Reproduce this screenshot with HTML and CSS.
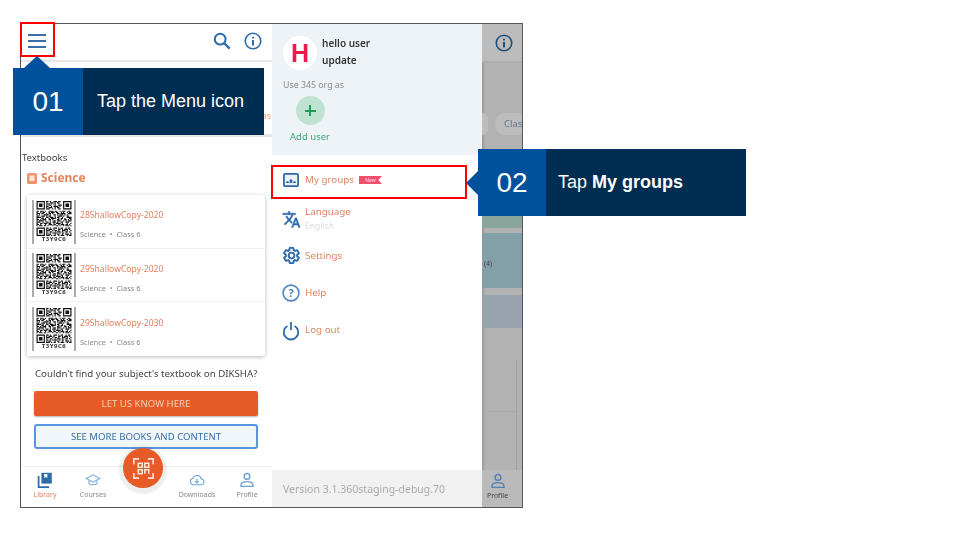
FILE: index.html
```html
<!DOCTYPE html>
<html lang="en">
<head>
  <meta charset="UTF-8" />
  <title>My groups - steps</title>
  <link rel="stylesheet" href="styles.css">
</head>
<body>
  <svg class="defs" width="0" height="0">
    <symbol id="qr" viewBox="0 0 29 29">
      <path d="M0 0h7v7H0zM1 1v5h5V1zM2 2h3v3H2zM22 0h7v7h-7zM23 1v5h5V1zM24 2h3v3h-3zM0 22h7v7H0zM1 23v5h5v-5zM2 24h3v3H2z" fill-rule="evenodd" fill="#111"/>
      <g fill="none" stroke="#111" stroke-width="1">
        <path d="M8 .5h13" stroke-dasharray="2 1 1 2 3 1 2 1"/>
        <path d="M8 1.5h13" stroke-dasharray="1 2 3 1 1 1 2 2"/>
        <path d="M8 2.5h13" stroke-dasharray="3 1 1 1 2 2 1 2"/>
        <path d="M8 3.5h13" stroke-dasharray="1 1 2 3 1 2 3 1"/>
        <path d="M8 4.5h13" stroke-dasharray="2 2 1 1 4 1 1 1"/>
        <path d="M8 5.5h13" stroke-dasharray="1 1 3 2 1 1 2 2"/>
        <path d="M8 6.5h13" stroke-dasharray="3 2 1 1 1 2 2 1"/>
        <path d="M0 8.5h29" stroke-dasharray="2 1 3 1 1 2 4 1 2 2 1 1 3 2"/>
        <path d="M0 9.5h29" stroke-dasharray="1 2 1 1 2 3 1 1 3 1 2 2 1 1"/>
        <path d="M0 10.5h29" stroke-dasharray="3 1 2 2 1 1 2 1 1 3 2 1 4 2"/>
        <path d="M0 11.5h29" stroke-dasharray="1 1 1 3 4 1 1 2 2 1 1 1 3 1"/>
        <path d="M0 12.5h29" stroke-dasharray="2 2 3 1 1 1 2 3 1 2 3 1 1 2"/>
        <path d="M0 13.5h29" stroke-dasharray="4 1 1 2 2 1 3 1 1 1 2 2 1 3"/>
        <path d="M0 14.5h29" stroke-dasharray="1 3 2 1 1 2 1 1 4 2 1 1 2 1"/>
        <path d="M0 15.5h29" stroke-dasharray="2 1 1 1 3 2 2 1 1 3 2 1 1 2"/>
        <path d="M0 16.5h29" stroke-dasharray="1 1 4 1 1 3 1 2 2 1 3 2 1 1"/>
        <path d="M0 17.5h29" stroke-dasharray="3 2 1 2 2 1 1 1 3 1 1 2 2 2"/>
        <path d="M0 18.5h29" stroke-dasharray="1 2 2 1 3 1 2 2 1 1 4 1 1 3"/>
        <path d="M0 19.5h29" stroke-dasharray="2 1 1 3 1 2 3 1 2 2 1 1 3 1"/>
        <path d="M0 20.5h29" stroke-dasharray="1 1 3 1 2 1 1 3 1 2 2 1 1 2"/>
        <path d="M8 22.5h21" stroke-dasharray="2 1 1 2 3 1 1 1 2 2 1 1"/>
        <path d="M8 23.5h21" stroke-dasharray="1 1 3 1 1 3 2 1 1 1 3 1"/>
        <path d="M8 24.5h21" stroke-dasharray="3 2 1 1 2 1 1 2 3 1 1 2"/>
        <path d="M8 25.5h21" stroke-dasharray="1 2 2 2 1 1 3 1 1 2 2 1"/>
        <path d="M8 26.5h21" stroke-dasharray="2 1 1 1 4 2 1 1 2 1 1 3"/>
        <path d="M8 27.5h21" stroke-dasharray="1 1 2 3 1 1 2 2 1 2 3 1"/>
        <path d="M8 28.5h21" stroke-dasharray="3 1 1 1 2 2 1 1 3 2 1 1"/>
      </g>
    </symbol>
    <symbol id="info" viewBox="0 0 20 20">
      <circle cx="10" cy="10" r="8.6" fill="none" stroke="currentColor" stroke-width="1.8"/>
      <circle cx="10" cy="6.2" r="1.2" fill="currentColor"/>
      <path d="M10 9v6" stroke="currentColor" stroke-width="2.2"/>
    </symbol>
    <symbol id="person" viewBox="0 0 20 20">
      <g fill="none" stroke="currentColor" stroke-width="1.7">
        <circle cx="10" cy="5.5" r="3.6"/>
        <path d="M2.5 18v-1.5c0-2.6 3-4.4 7.5-4.4s7.5 1.8 7.5 4.4V18z"/>
      </g>
    </symbol>
  </svg>

  <div class="slide">
    <div class="frame">
      <!-- left: library screen -->
      <div class="screen">
        <div class="topbar">
          <div class="burger"><span></span><span></span><span></span></div>
          <div class="topbar-right">
            <svg class="ic-search" viewBox="0 0 20 20"><circle cx="8" cy="8" r="6" fill="none" stroke="#2f6ba8" stroke-width="2.2"/><path d="M12.5 12.5l6 6" stroke="#2f6ba8" stroke-width="2.6"/></svg>
            <svg class="ic-info"><use href="#info"/></svg>
          </div>
        </div>
        <div class="filters"><span class="filter-cut">as</span></div>
        <div class="content">
          <div class="label">Textbooks</div>
          <div class="subject">
            <svg viewBox="0 0 10 11"><rect width="10" height="11" rx="1.5" fill="#ee9570"/><rect x="2.5" y="2.5" width="5" height="5.5" fill="#fbe3d8"/></svg>
            <span>Science</span>
          </div>
          <div class="book-card">
            <div class="book">
              <div class="qr-wrap">
                <svg class="qr"><use href="#qr"/></svg>
                <div class="qr-code">T3Y9C6</div>
              </div>
              <div class="book-info">
                <div class="book-title">28ShallowCopy-2020</div>
                <div class="book-meta">Science &nbsp;•&nbsp; Class 6</div>
              </div>
            </div>
            <div class="book">
              <div class="qr-wrap">
                <svg class="qr"><use href="#qr"/></svg>
                <div class="qr-code">T3Y9C6</div>
              </div>
              <div class="book-info">
                <div class="book-title">29ShallowCopy-2020</div>
                <div class="book-meta">Science &nbsp;•&nbsp; Class 6</div>
              </div>
            </div>
            <div class="book">
              <div class="qr-wrap">
                <svg class="qr"><use href="#qr"/></svg>
                <div class="qr-code">T3Y9C6</div>
              </div>
              <div class="book-info">
                <div class="book-title">29ShallowCopy-2030</div>
                <div class="book-meta">Science &nbsp;•&nbsp; Class 6</div>
              </div>
            </div>
          </div>
          <p class="notfound">Couldn't find your subject's textbook on DIKSHA?</p>
          <div class="btn btn-orange">LET US KNOW HERE</div>
          <div class="btn btn-outline">SEE MORE BOOKS AND CONTENT</div>
        </div>
        <div class="tabs">
          <div class="tab tab-active">
            <svg viewBox="0 0 20 20"><path d="M5.500 1h13v13.500h-13z" fill="#2f6ba8"/><path d="M13 2.500v5l-2-1.300L9 7.500v-5z" fill="#fff"/><path d="M2 5v14h13" fill="none" stroke="#2f6ba8" stroke-width="2.200"/></svg>
            <span>Library</span>
          </div>
          <div class="tab">
            <svg viewBox="0 0 20 20"><g fill="none" stroke="#7fb2de" stroke-width="1.400"><path d="M1.500 8L10 3.500 18.500 8 10 12.500z"/><path d="M5 10.500v4c1.500 2 8.500 2 10 0v-4"/></g></svg>
            <span>Courses</span>
          </div>
          <div class="tab-gap"></div>
          <div class="tab">
            <svg viewBox="0 0 20 20"><g fill="none" stroke="#6fa5d8" stroke-width="1.400"><path d="M5.500 16h9.500a3.600 3.600 0 0 0 .5-7.200A5.500 5.500 0 0 0 5 7.900 4.100 4.100 0 0 0 5.500 16z"/><path d="M10 8v5.500M7.800 11.500l2.200 2.200 2.200-2.200"/></g></svg>
            <span>Downloads</span>
          </div>
          <div class="tab tab-profile">
            <svg class="ic-person"><use href="#person"/></svg>
            <span>Profile</span>
          </div>
        </div>
        <div class="fab">
          <svg viewBox="0 0 24 24"><g fill="none" stroke="#fbe6dc" stroke-width="1.800"><path d="M1 7V1h6M17 1h6v6M1 17v6h6M23 17v6h-6"/><path d="M6 6h4.500v4.500H6zM13.500 6H18v4.500h-4.500zM6 13.500h4.500V18H6zM13.500 18v-4.500H18V18"/></g></svg>
        </div>
      </div>

      <!-- middle: side menu -->
      <div class="drawer">
        <div class="drawer-head">
          <div class="user">
            <div class="avatar">H</div>
            <div class="user-name">hello user<br>update</div>
          </div>
          <div class="org">Use 345 org as</div>
          <div class="add-user">
            <div class="add-circle"></div>
            <span>Add user</span>
          </div>
        </div>
        <div class="menu">
          <div class="menu-item item-groups">
            <svg viewBox="0 0 18 16"><rect x="1" y="1" width="16" height="14" rx="1.500" fill="#eaf1f8" stroke="#2f6ba8" stroke-width="2"/><path d="M3.500 11.500V10l1.500-1 1.500 1v1.500zM7.500 11.500V8l1.500-1.200L10.500 8v3.500zM11.500 11.500V10l1.500-1 1.500 1v1.500z" fill="#2f6ba8"/></svg>
            <span>My groups</span>
            <b class="new-flag">New</b>
          </div>
          <div class="menu-item item-lang">
            <svg viewBox="0 0 24 24"><path fill="#2f6ba8" stroke="#2f6ba8" stroke-width="0.600" d="M12.870 15.070l-2.540-2.510.03-.03c1.740-1.940 2.980-4.170 3.710-6.530H17V4h-7V2H8v2H1v1.990h11.170C11.500 7.920 10.440 9.750 9 11.350 8.070 10.320 7.300 9.190 6.690 8h-2c.73 1.630 1.730 3.170 2.980 4.560l-5.090 5.020L4 19l5-5 3.110 3.110.76-2.040zM18.500 10h-2L12 22h2l1.120-3h4.750L21 22h2l-4.500-12zm-2.620 7l1.620-4.330L19.120 17h-3.240z"/></svg>
            <div>
              <span>Language</span>
              <small>English</small>
            </div>
          </div>
          <div class="menu-item item-settings">
            <svg viewBox="0 0 24 24"><path fill="none" stroke="#2f6ba8" stroke-width="2.400" d="M19.140 12.940c.04-.3.06-.61.06-.94 0-.32-.02-.64-.07-.94l2.030-1.580a.49.49 0 0 0 .12-.61l-1.920-3.320a.488.488 0 0 0-.59-.22l-2.390.96c-.5-.38-1.030-.7-1.620-.94l-.36-2.540a.484.484 0 0 0-.48-.41h-3.840c-.24 0-.43.17-.47.41l-.36 2.540c-.59.24-1.130.57-1.620.94l-2.390-.96c-.22-.08-.47 0-.59.22L2.740 8.870c-.12.21-.08.47.12.61l2.030 1.580c-.05.3-.09.63-.09.94s.02.64.07.94l-2.030 1.580a.49.49 0 0 0-.12.61l1.920 3.320c.12.22.37.29.59.22l2.390-.96c.5.38 1.030.7 1.620.94l.36 2.540c.05.24.24.41.48.41h3.840c.24 0 .44-.17.47-.41l.36-2.540c.59-.24 1.130-.56 1.620-.94l2.390.96c.22.08.47 0 .59-.22l1.920-3.320c.12-.22.07-.47-.12-.61l-2.010-1.580zM12 15.600c-1.980 0-3.600-1.620-3.600-3.600s1.620-3.600 3.600-3.600 3.600 1.620 3.600 3.600-1.620 3.600-3.600 3.600z"/></svg>
            <span>Settings</span>
          </div>
          <div class="menu-item item-help">
            <svg viewBox="0 0 20 20"><circle cx="10" cy="10" r="8.800" fill="none" stroke="#4f86c2" stroke-width="1.800"/><text x="10" y="14" text-anchor="middle" class="help-q">?</text></svg>
            <span>Help</span>
          </div>
          <div class="menu-item item-logout">
            <svg viewBox="0 0 20 22"><path d="M6 5.500a8 8 0 1 0 8 0" fill="none" stroke="#2f6ba8" stroke-width="2"/><path d="M10 1v9" stroke="#2f6ba8" stroke-width="2"/></svg>
            <span>Log out</span>
          </div>
        </div>
        <div class="version">Version 3.1.360staging-debug.70</div>
      </div>

      <!-- right: dimmed rest of the screen -->
      <div class="scrim">
        <div class="scrim-top"><svg class="ic-info-dim"><use href="#info"/></svg></div>
        <div class="scrim-chips">
          <div class="scrim-chip-end"></div>
          <div class="scrim-chip">Clas</div>
        </div>
        <div class="scrim-green"></div>
        <div class="scrim-teal">(4)</div>
        <div class="scrim-blue"></div>
        <div class="scrim-cards">
          <div class="scrim-card"></div>
          <div class="scrim-card"></div>
        </div>
        <div class="scrim-tab">
          <svg class="ic-person"><use href="#person"/></svg>
          <span>Profile</span>
        </div>
      </div>
    </div>

    <div class="redbox redbox-menu"></div>
    <div class="redbox redbox-groups"></div>

    <div class="callout callout-one">
      <div class="callout-num">01</div>
      <div class="callout-text">Tap the Menu icon</div>
    </div>
    <div class="callout callout-two">
      <div class="callout-num">02</div>
      <div class="callout-text">Tap <b>My groups</b></div>
    </div>
  </div>
</body>
</html>
```

FILE: styles.css
```css
* {
  box-sizing: border-box;
}
body {
  margin: 0;
  background: #fff;
  font-family: "Noto Sans", sans-serif;
}
.defs {
  position: absolute;
}
.slide {
  position: relative;
  width: 960px;
  height: 540px;
  overflow: hidden;
  padding: 23px 0 0 20px;
}
.frame {
  display: flex;
  width: 503px;
  height: 485px;
  border: 1px solid #555;
}

/* left screen */
.screen {
  position: relative;
  display: flex;
  flex-direction: column;
  width: 251px;
  height: 483px;
  filter: blur(0.55px);
}
.topbar {
  display: flex;
  align-items: center;
  justify-content: space-between;
  height: 38px;
  padding: 0 10px 2px 7px;
  border-bottom: 2px solid #e8e8e8;
  flex-shrink: 0;
}
.burger {
  display: flex;
  flex-direction: column;
  gap: 4px;
  width: 18px;
}
.burger span {
  height: 2px;
  background: #3b6ea5;
}
.topbar-right {
  display: flex;
  align-items: center;
  gap: 13px;
}
.ic-search {
  width: 18px;
  height: 18px;
}
.ic-info {
  width: 18px;
  height: 18px;
  color: #2f6ba8;
}
.filters {
  position: relative;
  height: 75px;
  border-bottom: 3px solid #e6e6e6;
  flex-shrink: 0;
}
.filter-cut {
  position: absolute;
  right: 1px;
  top: 47px;
  font-size: 9px;
  color: #e8a283;
}
.content {
  flex: 1;
  padding: 14px 0 0 1px;
}
.label {
  font-size: 9.5px;
  line-height: 14px;
  color: #444;
}
.subject {
  display: flex;
  align-items: center;
  gap: 4px;
  margin: 4px 0 0 5px;
  font-size: 12px;
  font-weight: 700;
  line-height: 18px;
  color: #e8835a;
}
.subject svg {
  width: 10px;
  height: 11px;
}
.book-card {
  width: 238px;
  margin: 8px 0 0 5px;
  background: #fff;
  box-shadow: 0 1px 4px rgba(0,0,0,0.28);
  border-radius: 2px;
}
.book {
  display: flex;
  align-items: center;
  gap: 4px;
  height: 53px;
  padding: 0 0 0 5px;
  border-bottom: 1px solid #f0f0f0;
}
.book:first-child,
.book:last-child {
  height: 54px;
}
.book:last-child {
  border-bottom: 0;
}
.qr-wrap {
  width: 44px;
  height: 44px;
  padding: 1px 2px 0;
  border-left: 2px solid #aaa;
  border-right: 2px solid #aaa;
  text-align: center;
}
.qr {
  display: block;
  width: 36px;
  height: 35px;
}
.qr-code {
  font-size: 6px;
  font-weight: 700;
  line-height: 7px;
  letter-spacing: 0.5px;
  color: #333;
  white-space: nowrap;
}
.book-info {
  padding-top: 5px;
}
.book-title {
  font-size: 8.6px;
  line-height: 12px;
  color: #e0835f;
}
.book-meta {
  margin-top: 8px;
  font-size: 7.4px;
  line-height: 10px;
  color: #888;
}
.notfound {
  margin: 11px 0 0 13px;
  font-size: 9.7px;
  line-height: 14px;
  color: #444;
  white-space: nowrap;
}
.btn {
  display: flex;
  align-items: center;
  justify-content: center;
  width: 224px;
  height: 25px;
  margin: 10px 0 0 12px;
  font-size: 9.6px;
  border-radius: 2px;
}
.btn-orange {
  background: #e65b26;
  color: #f8cdb8;
  box-shadow: 0 1px 2px rgba(0,0,0,0.3);
}
.btn-outline {
  margin-top: 8px;
  background: #f1f6fb;
  border: 2px solid #5a93e0;
  border-radius: 3px;
  color: #3a6ea5;
}
.tabs {
  display: flex;
  height: 41px;
  border-top: 1px solid #eee;
  flex-shrink: 0;
}
.tab {
  display: flex;
  flex-direction: column;
  align-items: center;
  width: 48px;
  padding-top: 5px;
  font-size: 7px;
  line-height: 10px;
  color: #888;
}
.tab svg {
  width: 16px;
  height: 16px;
  margin-bottom: 2px;
}
.tab-active {
  color: #e0835f;
}
.tab-gap {
  width: 56px;
}
.tab-profile {
  margin-left: 2px;
}
.ic-person {
  color: #6a9fd6;
}
.fab {
  position: absolute;
  left: 102px;
  bottom: 19px;
  display: flex;
  align-items: center;
  justify-content: center;
  width: 40px;
  height: 40px;
  background: #e65b26;
  border-radius: 50%;
  box-shadow: 0 2px 2px 4px rgba(0,0,0,0.07);
}
.fab svg {
  width: 21px;
  height: 21px;
}

/* side menu */
.drawer {
  display: flex;
  flex-direction: column;
  width: 210px;
  height: 483px;
  background: #fff;
  filter: blur(0.55px);
}
.drawer-head {
  height: 131px;
  padding: 12px 0 0 11px;
  background: #eef3f8;
  flex-shrink: 0;
}
.user {
  display: flex;
  gap: 5px;
}
.avatar {
  display: flex;
  align-items: center;
  justify-content: center;
  width: 34px;
  height: 34px;
  background: #fff;
  border-radius: 50%;
  font-family: "Liberation Sans", sans-serif;
  font-size: 25px;
  font-weight: 700;
  color: #ec1a4b;
}
.user-name {
  margin-top: -1px;
  font-size: 10px;
  font-weight: 600;
  line-height: 17px;
  color: #333;
}
.org {
  margin-top: 9px;
  font-size: 8.8px;
  line-height: 12px;
  color: #888;
}
.add-user {
  display: flex;
  flex-direction: column;
  align-items: center;
  width: 54px;
  margin: 5px 0 0 0;
  font-size: 9.5px;
  line-height: 13px;
  color: #3aa876;
}
.add-circle {
  position: relative;
  width: 29px;
  height: 29px;
  margin-bottom: 5px;
  background: #bfe3d0;
  border-radius: 50%;
}
.add-circle::before,
.add-circle::after {
  content: "";
  position: absolute;
  background: #1e9e5a;
}
.add-circle::before {
  left: 9px;
  top: 13.5px;
  width: 11px;
  height: 2.2px;
}
.add-circle::after {
  left: 13.4px;
  top: 9px;
  width: 2.2px;
  height: 11px;
}
.menu {
  flex: 1;
  padding-left: 11px;
}
.menu-item {
  display: flex;
  align-items: center;
  gap: 6px;
  font-size: 9.8px;
  line-height: 14px;
  color: #df8560;
}
.menu-item svg {
  width: 16px;
  height: 16px;
  flex-shrink: 0;
}
.item-groups {
  margin-top: 17px;
  height: 16px;
}
.new-flag {
  width: 23px;
  height: 8px;
  margin-left: -1px;
  background: #f0506e;
  clip-path: polygon(0 0, 100% 0, 84% 50%, 100% 100%, 0 100%);
  font-size: 5px;
  font-weight: 400;
  line-height: 8px;
  text-align: center;
  color: #fde;
}
.item-lang {
  margin-top: 16px;
  height: 29px;
}
.item-lang svg {
  width: 19px;
  height: 19px;
  margin: 1px -2px 0 -1px;
}
.item-lang small {
  display: block;
  font-size: 8.5px;
  color: #ddd;
}
.item-settings {
  margin-top: 13px;
}
.item-settings svg {
  width: 19px;
  height: 19px;
  margin: 0 -2px 0 -1px;
}
.item-help {
  margin-top: 18px;
}
.item-help svg {
  width: 18px;
  height: 18px;
  margin: 1px -1px 0 -1px;
}
.help-q {
  font-size: 12px;
  font-weight: 700;
  fill: #4f86c2;
}
.item-logout {
  margin-top: 17px;
}
.item-logout svg {
  width: 18px;
  height: 20px;
  margin: 2px -1px 0 -1px;
}
.version {
  display: flex;
  align-items: center;
  height: 37px;
  padding-left: 11px;
  background: #f1f1f1;
  font-size: 10.5px;
  color: #aaa;
  flex-shrink: 0;
}

/* dimmed area */
.scrim {
  display: flex;
  flex-direction: column;
  flex: 1;
  height: 483px;
  background: #b2b2b2;
  box-shadow: inset 2px 0 2px rgba(0,0,0,0.12);
  filter: blur(0.55px);
  overflow: hidden;
}
.scrim-top {
  display: flex;
  align-items: center;
  justify-content: center;
  height: 39px;
  padding-left: 3px;
  background: #bcbcbc;
  border-bottom: 2px solid #adadad;
  flex-shrink: 0;
}
.ic-info-dim {
  width: 18px;
  height: 18px;
  color: #1f4e7a;
}
.scrim-chips {
  display: flex;
  gap: 7px;
  height: 86px;
  padding-top: 50px;
  flex-shrink: 0;
}
.scrim-chip-end {
  width: 6px;
  height: 22px;
  background: #bdbdbd;
  border-radius: 0 11px 11px 0;
}
.scrim-chip {
  flex: 1;
  height: 22px;
  padding-left: 9px;
  background: #bdbdbd;
  border-radius: 11px 0 0 11px;
  font-size: 9.5px;
  line-height: 22px;
  overflow: hidden;
  color: #5d7a94;
}
.scrim-green {
  height: 79px;
  background: #8aa59b;
  flex-shrink: 0;
}
.scrim-teal {
  height: 55px;
  margin-top: 5px;
  padding: 26px 0 0 2px;
  background: #83a0a8;
  font-size: 7px;
  line-height: 10px;
  color: #444;
  flex-shrink: 0;
}
.scrim-blue {
  height: 33px;
  margin-top: 7px;
  background: #9aa4ae;
  flex-shrink: 0;
}
.scrim-cards {
  flex: 1;
  padding-top: 32px;
}
.scrim-card {
  width: 35px;
  height: 52px;
  border-right: 1px solid #a2a2a2;
  border-bottom: 1px solid #a8a8a8;
}
.scrim-card:last-child {
  height: 58px;
  border-bottom: 0;
}
.scrim-tab {
  display: flex;
  flex-direction: column;
  align-items: center;
  height: 37px;
  padding: 3px 9px 0 0;
  background: #bababa;
  font-size: 7px;
  line-height: 10px;
  color: #444;
  flex-shrink: 0;
}
.scrim-tab svg {
  width: 16px;
  height: 16px;
  margin-bottom: 2px;
  color: #4f7fb5;
}

/* red highlight boxes */
.redbox {
  position: absolute;
  border: 2px solid #f00;
}
.redbox-menu {
  left: 20px;
  top: 22px;
  width: 35px;
  height: 35px;
}
.redbox-groups {
  left: 271px;
  top: 165px;
  width: 196px;
  height: 34px;
}

/* step callouts */
.callout {
  position: absolute;
  display: flex;
  height: 67px;
  background: #002d52;
  font-family: "Liberation Sans", sans-serif;
  color: #fff;
}
.callout-num {
  display: flex;
  align-items: center;
  justify-content: center;
  width: 70px;
  background: #00519c;
  font-size: 28px;
}
.callout-text {
  display: flex;
  align-items: center;
  gap: 0.28em;
  padding-left: 14px;
  font-size: 18px;
}
.callout-one {
  left: 13px;
  top: 68px;
  width: 251px;
}
.callout-one::before {
  content: "";
  position: absolute;
  left: 11px;
  top: -12px;
  border-left: 13px solid transparent;
  border-right: 13px solid transparent;
  border-bottom: 12px solid #00519c;
}
.callout-two {
  left: 478px;
  top: 149px;
  width: 268px;
}
.callout-two .callout-num {
  width: 68px;
}
.callout-two .callout-text {
  padding-left: 12px;
}
.callout-two::before {
  content: "";
  position: absolute;
  left: -12px;
  top: 22px;
  border-top: 12px solid transparent;
  border-bottom: 12px solid transparent;
  border-right: 12px solid #00519c;
}
```
